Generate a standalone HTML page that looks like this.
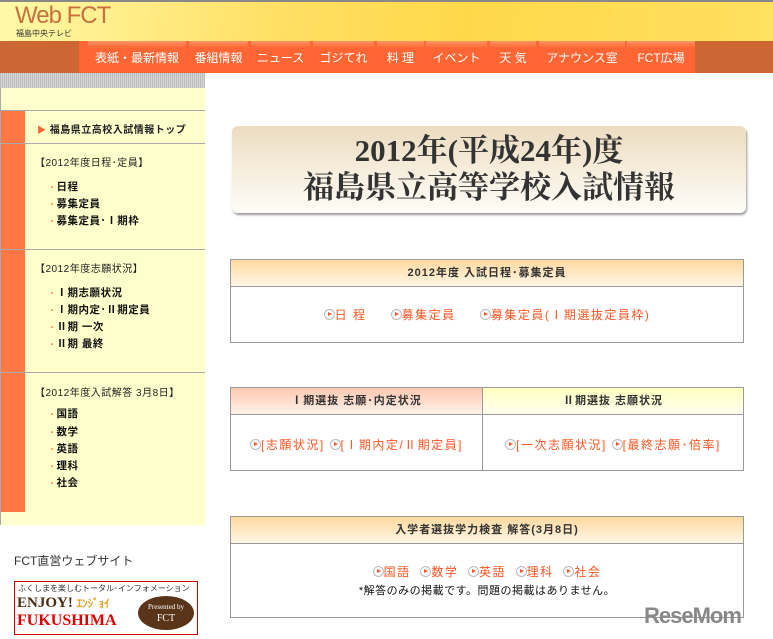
<!DOCTYPE html>
<html><head><meta charset="utf-8"><style>
*{margin:0;padding:0;box-sizing:border-box}
body{width:773px;height:639px;overflow:hidden;background:#fff;font-family:"Liberation Sans","Noto Sans CJK JP",sans-serif;position:relative;color:#222}
.abs{position:absolute}
#hdr{left:0;top:0;width:773px;height:41px;background:linear-gradient(100deg,#fff9a8 0%,#ffe066 35%,#ffd84a 60%,#ffe060 100%);border-top:2px solid #888}
#logo{left:15px;top:2px;font-size:24px;color:#c87040;letter-spacing:-1px}
#sub{left:16px;top:28px;font-size:8px;color:#333}
#nav{left:0;top:41px;width:773px;height:32px;background:#cc6633}
#navin{left:79px;top:41px;width:616px;height:32px;background:#ff6633}
.ni{position:absolute;top:41px;height:32px;line-height:34px;color:#fff;font-size:12px;text-align:center;background:linear-gradient(#ff9466 0,#ff6633 7px);border-left:2px solid #ff6633}
#stripe{left:0;top:73px;width:205px;height:15px;background:repeating-linear-gradient(90deg,#bbb 0 1px,#d8d8d8 1px 2px)}
#side{left:0;top:88px;width:205px;height:437px;background:#ffffcc;border-left:1px solid #aaa}
#ostripe{left:1px;top:111px;width:24px;height:401px;background:#ff7744}
.hl{position:absolute;left:1px;width:204px;height:1px;background:#aaa}
.st{position:absolute;font-size:10px;color:#222;letter-spacing:.5px}
.li{position:absolute;left:56px;font-size:10.5px;color:#111;letter-spacing:.5px;font-weight:bold}
.li:before{content:"・";color:#f63;margin-left:-8px;font-size:8px;font-weight:normal}
#title{left:232px;top:126px;width:514px;height:87px;border-radius:6px;background:linear-gradient(#ecdcc0,#fffdf8);box-shadow:1px 2px 2px #999;text-align:center;font-family:"Liberation Serif","Noto Serif CJK SC",serif;font-weight:bold;font-size:31px;line-height:37px;color:#333;padding-top:6px}
.box{position:absolute;border:1px solid #999;background:#fff}
.bh{height:27px;border-bottom:1px solid #999;text-align:center;font-size:11px;line-height:27px;color:#333;background:linear-gradient(#ffd9a0,#fff6e6);letter-spacing:1px;font-weight:bold}
.lk{color:#ff5522;font-size:12px;letter-spacing:1.5px}
.ic{display:inline-block;width:11px;height:11px;border:1px solid #bbb;border-radius:50%;vertical-align:-1px;position:relative;background:#fafafa}
.ic:after{content:"";position:absolute;left:3px;top:2px;border-left:4px solid #f53;border-top:2.5px solid transparent;border-bottom:2.5px solid transparent}
</style></head><body>
<div id="hdr" class="abs"></div>
<div id="logo" class="abs">Web FCT</div>
<div id="sub" class="abs">福島中央テレビ</div>
<div id="nav" class="abs"></div>
<div id="navin" class="abs"></div>
<div class="ni" style="left:86px;width:100px">表紙・最新情報</div>
<div class="ni" style="left:187px;width:61px">番組情報</div>
<div class="ni" style="left:249px;width:61px">ニュース</div>
<div class="ni" style="left:311px;width:63px">ゴジてれ</div>
<div class="ni" style="left:375px;width:49px">料 理</div>
<div class="ni" style="left:424px;width:63px">イベント</div>
<div class="ni" style="left:488px;width:48px">天 気</div>
<div class="ni" style="left:537px;width:88px">アナウンス室</div>
<div class="ni" style="left:625px;width:70px">FCT広場</div>
<div id="stripe" class="abs"></div>
<div id="side" class="abs"></div>
<div id="ostripe" class="abs"></div>
<div class="hl" style="top:110px"></div>
<div class="hl" style="top:143px"></div>
<div class="hl" style="top:249px"></div>
<div class="hl" style="top:372px"></div>
<div class="st" style="left:37px;top:121px;font-weight:bold"><span style="color:#f63;font-size:9px">▶</span> 福島県立高校入試情報トップ</div>
<div class="st" style="top:154px;left:35px">【2012年度日程･定員】</div>
<div class="li" style="top:179px">日程</div>
<div class="li" style="top:196px">募集定員</div>
<div class="li" style="top:213px">募集定員･Ⅰ期枠</div>
<div class="st" style="top:260px;left:35px">【2012年度志願状況】</div>
<div class="li" style="top:285px">Ⅰ期志願状況</div>
<div class="li" style="top:302px">Ⅰ期内定･Ⅱ期定員</div>
<div class="li" style="top:319px">Ⅱ期 一次</div>
<div class="li" style="top:336px">Ⅱ期 最終</div>
<div class="st" style="top:384px;left:35px">【2012年度入試解答 3月8日】</div>
<div class="li" style="top:406px">国語</div>
<div class="li" style="top:424px">数学</div>
<div class="li" style="top:441px">英語</div>
<div class="li" style="top:458px">理科</div>
<div class="li" style="top:475px">社会</div>
<div class="abs" style="left:14px;top:552px;font-size:12px;color:#333">FCT直営ウェブサイト</div>
<div class="abs" style="left:14px;top:581px;width:184px;height:54px;border:1px solid #c00;background:#fff;overflow:hidden">
<div style="font-size:8px;padding:1px 3px;color:#333;white-space:nowrap">ふくしまを楽しむトータル･インフォメーション</div>
<div style="font-family:'Liberation Serif',serif;font-weight:bold;font-size:15px;color:#4a2a10;padding-left:2px;line-height:16px">ENJOY! <span style="color:#e8a020;font-size:11px">ｴﾝｼﾞｮｲ</span></div>
<div style="font-family:'Liberation Serif',serif;font-weight:bold;font-size:16px;color:#d00;padding-left:2px;line-height:17px">FUKUSHIMA</div>
<div style="position:absolute;right:3px;top:14px;width:56px;height:34px;border-radius:50%;background:#5a3418;color:#fff;font-family:'Liberation Serif',serif;font-size:7px;text-align:center;padding-top:6px;line-height:11px">Presented by<br><span style="font-size:10px">FCT</span></div>
</div>
<div id="title" class="abs">2012年(平成24年)度<br>福島県立高等学校入試情報</div>
<div class="box" style="left:230px;top:259px;width:514px;height:84px"><div class="bh">2012年度 入試日程･募集定員</div>
<div style="text-align:center;padding-top:19px" class="lk"><span class="ic"></span>日 程 &nbsp; &nbsp; <span class="ic"></span>募集定員 &nbsp; &nbsp; <span class="ic"></span>募集定員(Ⅰ期選抜定員枠)</div></div>
<div class="box" style="left:230px;top:387px;width:514px;height:84px">
<div style="position:absolute;left:251px;top:0;width:1px;height:82px;background:#999"></div>
<div class="bh" style="position:absolute;left:0;width:251px;background:linear-gradient(#ffc8b0,#fff2ea)">Ⅰ期選抜 志願･内定状況</div>
<div class="bh" style="position:absolute;left:252px;width:260px;background:linear-gradient(#ffffc0,#fffff0)">Ⅱ期選抜 志願状況</div>
<div class="lk" style="position:absolute;left:0;width:251px;top:48px;text-align:center"><span class="ic"></span>[志願状況] <span class="ic"></span>[Ⅰ期内定/Ⅱ期定員]</div>
<div class="lk" style="position:absolute;left:252px;width:260px;top:48px;text-align:center"><span class="ic"></span>[一次志願状況] <span class="ic"></span>[最終志願･倍率]</div>
</div>
<div class="box" style="left:230px;top:516px;width:514px;height:102px"><div class="bh">入学者選抜学力検査 解答(3月8日)</div>
<div style="text-align:center;padding-top:19px" class="lk"><span class="ic"></span>国語 &nbsp;<span class="ic"></span>数学 &nbsp;<span class="ic"></span>英語 &nbsp;<span class="ic"></span>理科 &nbsp;<span class="ic"></span>社会</div>
<div style="text-align:center;font-size:11px;color:#111;margin-top:2px;letter-spacing:.5px">*解答のみの掲載です。問題の掲載はありません。</div></div>
<div class="abs" style="left:644px;top:603px;font-size:22px;font-weight:bold;color:#888;letter-spacing:-1px">ReseMom</div>
</body></html>
